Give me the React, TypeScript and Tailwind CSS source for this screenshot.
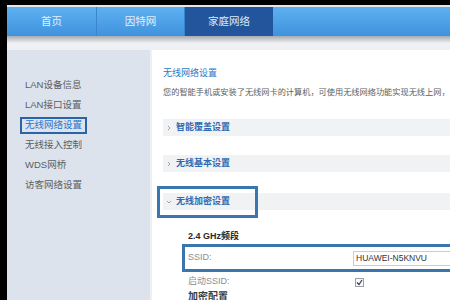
import React from 'react';

const font = { fontFamily: "'Liberation Sans', 'Noto Sans CJK SC', sans-serif" };

const tabs = [
  { label: '首页', w: 'w-[90px]', active: false },
  { label: '因特网', w: 'w-[88px]', active: false },
  { label: '家庭网络', w: 'w-[88px]', active: true },
];

const menu = ['LAN设备信息', 'LAN接口设置', '无线网络设置', '无线接入控制', 'WDS网桥', '访客网络设置'];

function Chevron({ down }: { down?: boolean }) {
  return (
    <svg width="6" height="6" viewBox="0 0 6 6" className="mr-[4px] shrink-0">
      {down ? (
        <path d="M1 2 L3 4 L5 2" stroke="#9aa3ad" strokeWidth="1" fill="none" />
      ) : (
        <path d="M2 1 L4 3 L2 5" stroke="#9aa3ad" strokeWidth="1" fill="none" />
      )}
    </svg>
  );
}

function SectionBar({ label, open }: { label: string; open?: boolean }) {
  return (
    <div className="h-[17px] bg-[#f1f2f3] flex items-center pl-[3px] text-[9px] font-bold text-[#2e6ab3]">
      <Chevron down={open} />
      {label}
    </div>
  );
}

export default function App() {
  return (
    <div className="w-[450px] h-[300px] bg-black pt-[5px] pl-[7px] overflow-hidden" style={font}>
      <div className="flex flex-col h-full bg-[#eef0f3] border-t-2 border-[#e4e8ec]">
        {/* top nav */}
        <div className="h-[29px] flex shrink-0 bg-gradient-to-b from-[#5db0f0] to-[#3f93dd]">
          {tabs.map((t) => (
            <div
              key={t.label}
              className={
                t.active
                  ? `${t.w} flex items-center justify-center bg-[#22559c] text-[10.5px] text-[#dce8f5]`
                  : `${t.w} flex items-center justify-center border-r border-[#3a86cc] text-[10.5px] text-[#e3effa]`
              }
            >
              {t.label}
            </div>
          ))}
        </div>
        <div className="h-[7px] shrink-0 bg-gradient-to-b from-[#a7aaae] to-[#eef0f3]" />
        <div className="h-[7px] shrink-0" />

        <div className="flex-1 flex gap-[2px] min-h-0">
          {/* sidebar */}
          <div className="w-[143px] shrink-0 bg-[#dce3ec] pt-[25px]">
            {menu.map((m, i) => (
              <div key={m} className="h-[20px] flex items-center pl-[18px] text-[9.5px] text-[#5a5f66]">
                {i === 2 ? (
                  <span className="h-[17px] -ml-[5px] px-[3px] flex items-center border-2 border-[#2a64a8] text-[#2777cc]">
                    {m}
                  </span>
                ) : (
                  m
                )}
              </div>
            ))}
          </div>

          {/* content */}
          <div className="flex-1 bg-white pl-[11px] pt-[18px] overflow-hidden">
            <div className="h-[12px] flex items-center text-[9px] text-[#2b78c6]">无线网络设置</div>
            <div className="h-[12px] mt-[7px] flex items-center text-[8.2px] text-[#5b5f63] whitespace-nowrap">
              您的智能手机或安装了无线网卡的计算机，可使用无线网络功能实现无线上网，
            </div>

            <div className="mt-[20px]">
              <SectionBar label="智能覆盖设置" />
            </div>
            <div className="mt-[19px]">
              <SectionBar label="无线基本设置" />
            </div>
            <div className="mt-[21px] relative">
              <SectionBar label="无线加密设置" open />
              <div className="absolute left-[-6px] top-[-7px] w-[101px] h-[32px] border-[3px] border-[#3a76b0]" />
            </div>

            <div className="h-[12px] mt-[21px] ml-[25px] flex items-center text-[9px] font-bold text-[#2a2a2a]">
              2.4 GHz频段
            </div>
            <div className="h-[28px] mt-[1px] ml-[19px] -mr-[10px] border-[3px] border-[#3b75ad] flex items-center">
              <div className="w-[168px] pl-[3px] text-[9px] text-[#8a8e93]">SSID:</div>
              <div className="flex-1 h-[15px] border border-[#c9ccd0] flex items-center pl-[2px] text-[8.5px] text-[#333]">
                HUAWEI-N5KNVU
              </div>
            </div>
            <div className="h-[14px] mt-[3px] ml-[25px] flex items-center">
              <div className="w-[167px] text-[9px] text-[#8a8e93]">启动SSID:</div>
              <div className="w-[9px] h-[9px] border border-[#9aa0a6] bg-[#f6f7f8] flex items-center justify-center">
                <svg width="7" height="7" viewBox="0 0 7 7">
                  <path d="M1 3.5 L3 5.5 L6 1" stroke="#3a3f45" strokeWidth="1.2" fill="none" />
                </svg>
              </div>
            </div>
            <div className="h-[14px] mt-[0px] ml-[25px] flex items-center text-[10px] font-bold text-[#3a3d40]">
              加密配置
            </div>
          </div>
        </div>
      </div>
    </div>
  );
}
